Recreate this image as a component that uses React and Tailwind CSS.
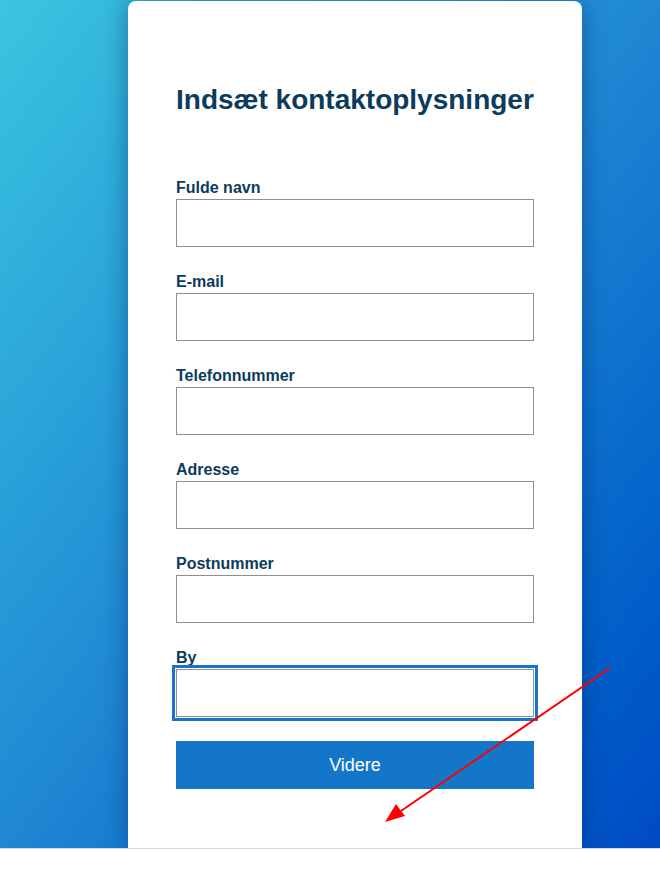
import React from 'react'

const fields = ['Fulde navn', 'E-mail', 'Telefonnummer', 'Adresse', 'Postnummer', 'By']

function App() {
  return (
    <div className="min-h-[882px] bg-white font-['Liberation_Sans',Arial,sans-serif]">
      <div className="relative h-[849px] overflow-hidden border-b border-[#d9d9d9] bg-linear-to-br from-[#3bc5df] via-[#1f87d3] to-[#004ac4] pt-px">
        <div className="ml-[128px] h-[848px] w-[454px] rounded-t-lg bg-white px-12 pt-[80px] shadow-[0_0_24px_rgba(0,30,90,0.45)]">
          <h1 className="text-[28px] leading-[38px] font-bold text-[#0c3b5b]">Indsæt kontaktoplysninger</h1>

          <form className="mt-[58px] flex flex-col gap-6">
            {fields.map((label, i) => (
              <div key={label} className="flex flex-col">
                <label className="text-base leading-[22px] font-bold text-[#0c3b5b]">{label}</label>
                <input
                  type="text"
                  className={`h-12 w-full border border-[#8f8f8f] bg-white px-3 text-base outline-none ${
                    i === fields.length - 1 ? 'ring-[3px] ring-[#1674cb] ring-offset-1' : ''
                  }`}
                />
              </div>
            ))}

            <button
              type="button"
              className="h-12 w-full bg-[#1476c9] text-lg text-white"
            >
              Videre
            </button>
          </form>
        </div>

        <svg className="pointer-events-none absolute left-0 top-0" width="660" height="849">
          <line x1="610" y1="668" x2="398" y2="813" stroke="#ff0000" strokeWidth="2" />
          <polygon points="385,822 396,804 405,816" fill="#ff0000" />
        </svg>
      </div>
    </div>
  )
}

export default App
